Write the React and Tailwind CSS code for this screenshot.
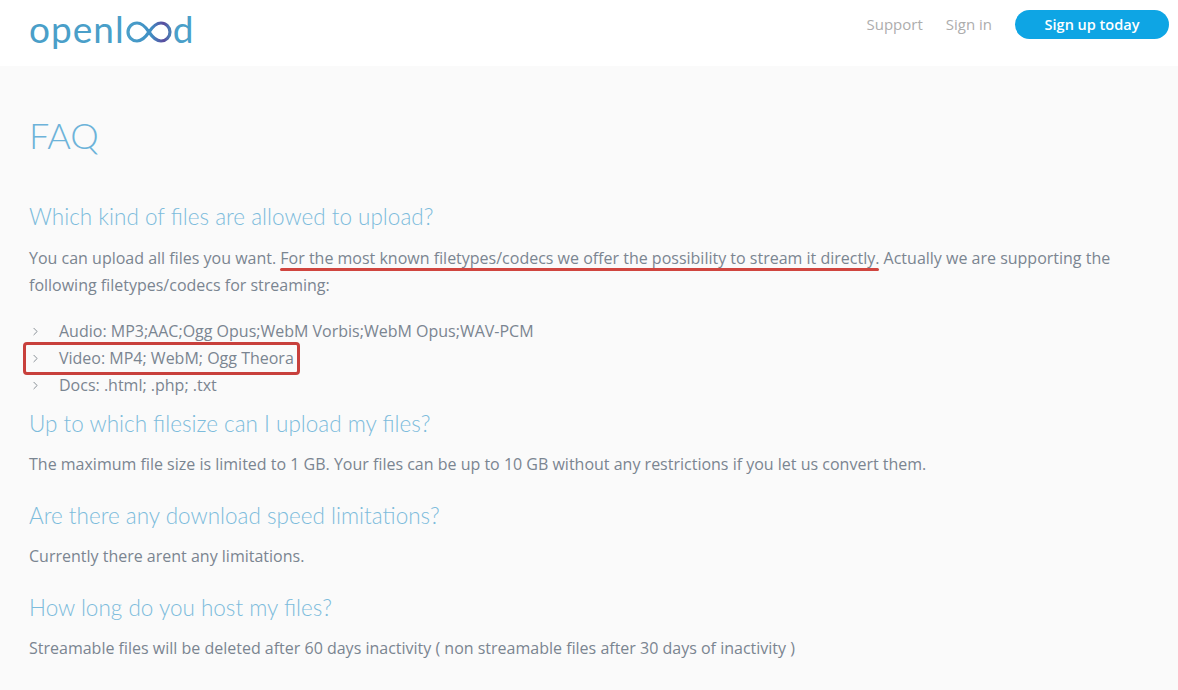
import { ChevronRight } from 'lucide-react';

const heading = "font-['Lato'] font-light text-[22.5px] leading-[30px] text-[#7dbcdc]";
const body = "text-base leading-[27px] text-[#7a8591]";

function Logo() {
    return (
        <div className="flex items-center h-[40px] font-['Lato'] text-[37px] leading-[40px] text-[#4a9fc9] tracking-[1px]">
            <span>openl</span>
            <svg width="50" height="24" viewBox="0 0 50 24" fill="none" className="mt-[5px] -mx-[1px]">
                <defs>
                    <linearGradient id="loop" x1="0" x2="1" y1="0" y2="0">
                        <stop offset="0" stopColor="#4a9fc9" />
                        <stop offset="0.55" stopColor="#3f8fc4" />
                        <stop offset="0.85" stopColor="#5b4a9e" />
                        <stop offset="1" stopColor="#4a7fb5" />
                    </linearGradient>
                </defs>
                <path d="M25 12C21 6 18 3 13 3a9 9 0 0 0 0 18c5 0 8-3 12-9s7-9 12-9a9 9 0 0 1 0 18c-5 0-8-3-12-9Z" stroke="url(#loop)" strokeWidth="3.2" />
            </svg>
            <span>d</span>
        </div>
    );
}

function ListItem({ children }) {
    return (
        <li className="flex items-center h-[27px]">
            <ChevronRight className="w-[13px] h-[13px] text-[#6f7780] mr-[17px]" strokeWidth={1.5} />
            <span>{children}</span>
        </li>
    );
}

export default function App() {
    return (
        <div className="min-h-[690px] h-[690px] overflow-hidden bg-[#fafafa] font-['Open_Sans',sans-serif]">
            <header className="h-[66px] bg-white flex items-start justify-between pl-[29px] pr-[9px]">
                <div className="pt-[9px]">
                    <Logo />
                </div>
                <nav className="flex items-center pt-[10px] text-[15px] text-[#adadad]">
                    <a className="mr-[23px]">Support</a>
                    <a className="mr-[23px]">Sign in</a>
                    <a className="w-[154px] h-[29px] rounded-full bg-[#0ea5e4] text-white font-semibold text-[14.5px] flex items-center justify-center">Sign up today</a>
                </nav>
            </header>

            <main className="relative px-[29px] pt-[45px]">
                <h1 className="font-['Lato'] font-light text-[36px] leading-[48px] text-[#6db3d9]">FAQ</h1>

                <h2 className={`${heading} mt-[43px]`}>Which kind of files are allowed to upload?</h2>
                <p className={`${body} mt-[13px]`}>
                    You can upload all files you want.{' '}
                    <span className="relative">
                        For the most known filetypes/codecs we offer the possibility to stream it directly.
                        <span className="absolute left-0 right-0 top-[21px] h-[3px] rounded-full bg-[#d0453f]"></span>
                    </span>{' '}
                    Actually we are supporting the following filetypes/codecs for streaming:
                </p>
                <ul className={`${body} relative mt-[19px]`}>
                    <ListItem>Audio: MP3;AAC;Ogg Opus;WebM Vorbis;WebM Opus;WAV-PCM</ListItem>
                    <ListItem>Video: MP4; WebM; Ogg Theora</ListItem>
                    <ListItem>Docs: .html; .php; .txt</ListItem>
                    <div className="absolute left-[-6px] top-[24px] w-[277px] h-[33px] rounded-[4px] border-[3px] border-[#c8403c]"></div>
                </ul>

                <h2 className={`${heading} mt-[10px]`}>Up to which filesize can I upload my files?</h2>
                <p className={`${body} mt-[12px]`}>The maximum file size is limited to 1 GB. Your files can be up to 10 GB without any restrictions if you let us convert them.</p>

                <h2 className={`${heading} mt-[23px]`}>Are there any download speed limitations?</h2>
                <p className={`${body} mt-[12px]`}>Currently there arent any limitations.</p>

                <h2 className={`${heading} mt-[23px]`}>How long do you host my files?</h2>
                <p className={`${body} mt-[12px]`}>Streamable files will be deleted after 60 days inactivity ( non streamable files after 30 days of inactivity )</p>
            </main>
        </div>
    );
}
